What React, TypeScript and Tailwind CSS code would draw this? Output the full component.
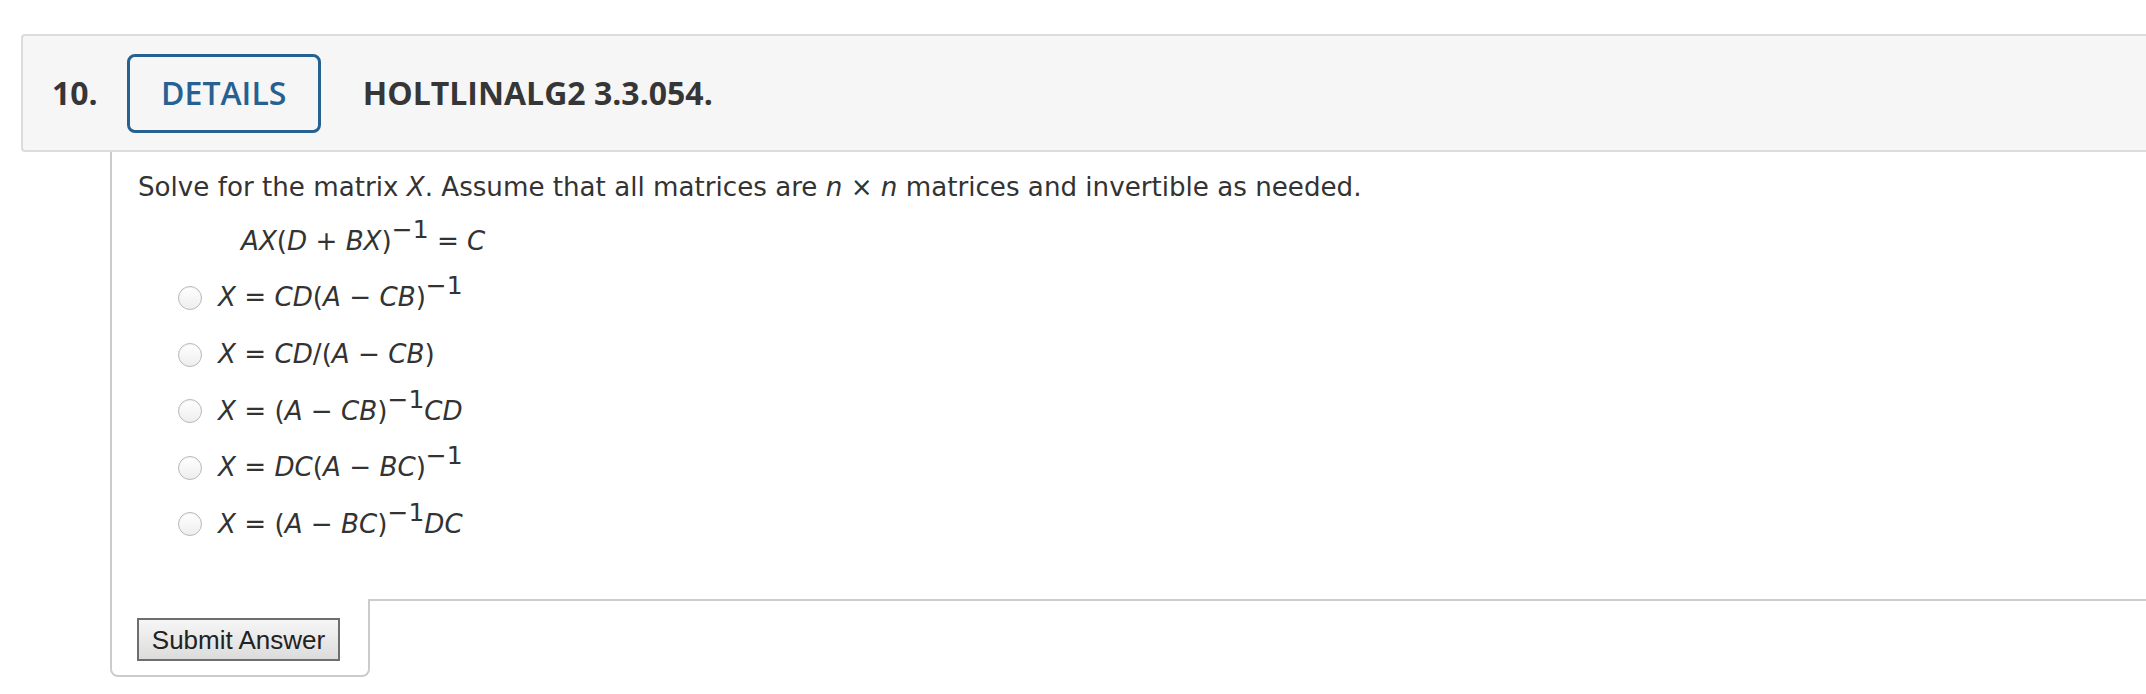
import type { ReactNode } from "react";

const body = { fontFamily: '"DejaVu Sans", Verdana, sans-serif' };
const head = { fontFamily: '"Open Sans", "Liberation Sans", sans-serif' };

function I({ children }: { children: ReactNode }) {
  return <i className="italic">{children}</i>;
}

function Sup({ children }: { children: ReactNode }) {
  return <sup className="relative -top-[12px] text-[25px] leading-none">{children}</sup>;
}

const options: ReactNode[] = [
  <>
    <I>X</I> = <I>CD</I>(<I>A</I> − <I>CB</I>)<Sup>−1</Sup>
  </>,
  <>
    <I>X</I> = <I>CD</I>/(<I>A</I> − <I>CB</I>)
  </>,
  <>
    <I>X</I> = (<I>A</I> − <I>CB</I>)<Sup>−1</Sup>
    <I>CD</I>
  </>,
  <>
    <I>X</I> = <I>DC</I>(<I>A</I> − <I>BC</I>)<Sup>−1</Sup>
  </>,
  <>
    <I>X</I> = (<I>A</I> − <I>BC</I>)<Sup>−1</Sup>
    <I>DC</I>
  </>,
];

function Radio() {
  return (
    <span className="size-[24px] shrink-0 rounded-full border border-[#b8b8b8] bg-gradient-to-b from-white to-[#eeeeee] shadow-[inset_0_1px_1px_rgba(0,0,0,0.05)]" />
  );
}

export default function App() {
  return (
    <div className="min-h-screen overflow-hidden bg-white pt-[34px] pl-[21px]">
      <div
        className="flex h-[118px] items-center rounded-tl-[4px] rounded-bl-[4px] border-2 border-r-0 border-[#dcdcdc] bg-[#f6f6f6] pl-[29px] text-[#363636]"
        style={head}
      >
        <span className="text-[32px] font-bold">10.</span>
        <span className="ml-[29px] flex h-[79px] w-[194px] items-center justify-center rounded-[8px] border-[3px] border-[#276192] text-[32px] font-semibold text-[#276192]">
          DETAILS
        </span>
        <span className="ml-[42px] text-[32px] font-bold">HOLTLINALG2 3.3.054.</span>
      </div>

      <div className="ml-[89px] text-[26.15px] text-[#333]" style={body}>
        <div className="border-l-2 border-[#cccccc] pt-[16px] pb-[55px] pl-[26px]">
          <div className="flex h-[40px] items-center">
            <span>
              Solve for the matrix <I>X</I>. Assume that all matrices are <I>n</I> × <I>n</I> matrices and
              invertible as needed.
            </span>
          </div>
          <div className="mt-[14px] flex h-[40px] items-center pl-[103px]">
            <span>
              <I>AX</I>(<I>D</I> + <I>BX</I>)<Sup>−1</Sup> = <I>C</I>
            </span>
          </div>
          <div className="mt-[16px] flex flex-col gap-[16.6px] pl-[40px]">
            {options.map((o, i) => (
              <div key={i} className="flex h-[40px] items-center gap-[16px]">
                <Radio />
                <span>{o}</span>
              </div>
            ))}
          </div>
        </div>

        <div className="flex">
          <div className="w-[260px] rounded-b-[8px] border-2 border-t-0 border-[#cccccc] pt-[19px] pb-[14px] pl-[25px]">
            <button
              className="h-[43px] w-[203px] border-2 border-[#6e6e6e] bg-gradient-to-b from-[#f6f6f6] to-[#dcdcdc] text-[26px] leading-none text-[#222]"
              style={{ fontFamily: '"Liberation Sans", Arial, sans-serif' }}
            >
              Submit Answer
            </button>
          </div>
          <div className="flex-1 border-t-2 border-[#cccccc]" />
        </div>
      </div>
    </div>
  );
}
